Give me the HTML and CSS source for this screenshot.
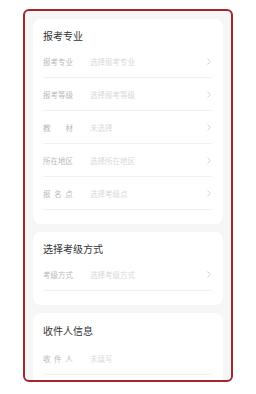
FILE: index.html
```html
<!DOCTYPE html>
<html lang="zh">
<head>
<meta charset="utf-8">
<link rel="stylesheet" href="styles.css">
</head>
<body>
<div class="frame">
  <section class="card">
    <h2 class="title">报考专业</h2>
    <div class="row"><span class="label">报考专业</span><span class="value">选择报考专业</span><svg class="chev" viewBox="0 0 4 7"><polyline points="0.5,0.5 3.3,3.5 0.5,6.5"/></svg></div>
    <div class="row"><span class="label">报考等级</span><span class="value">选择报考等级</span><svg class="chev" viewBox="0 0 4 7"><polyline points="0.5,0.5 3.3,3.5 0.5,6.5"/></svg></div>
    <div class="row"><span class="label">教　　材</span><span class="value">未选择</span><svg class="chev" viewBox="0 0 4 7"><polyline points="0.5,0.5 3.3,3.5 0.5,6.5"/></svg></div>
    <div class="row"><span class="label">所在地区</span><span class="value">选择所在地区</span><svg class="chev" viewBox="0 0 4 7"><polyline points="0.5,0.5 3.3,3.5 0.5,6.5"/></svg></div>
    <div class="row"><span class="label spaced">报名点</span><span class="value">选择考级点</span><svg class="chev" viewBox="0 0 4 7"><polyline points="0.5,0.5 3.3,3.5 0.5,6.5"/></svg></div>
  </section>
  <section class="card">
    <h2 class="title">选择考级方式</h2>
    <div class="row"><span class="label">考级方式</span><span class="value">选择考级方式</span><svg class="chev" viewBox="0 0 4 7"><polyline points="0.5,0.5 3.3,3.5 0.5,6.5"/></svg></div>
  </section>
  <section class="card last">
    <h2 class="title">收件人信息</h2>
    <div class="row"><span class="label spaced">收件人</span><span class="value">未填写</span></div>
  </section>
</div>
</body>
</html>
```
FILE: styles.css
```css
html, body {
  margin: 0;
  padding: 0;
  background: #ffffff;
}
body {
  font-family: "Noto Sans CJK SC", "Noto Sans", sans-serif;
}
.frame {
  margin: 9px 0 0 23px;
  width: 210px;
  height: 373px;
  box-sizing: border-box;
  border: 2px solid #a3262b;
  border-radius: 6px;
  background: #f6f6f6;
  padding: 8px;
  overflow: hidden;
  display: flex;
  flex-direction: column;
  gap: 8px;
}
.card {
  flex: none;
  background: #ffffff;
  border-radius: 8px;
  padding: 10px 11px 14px 10px;
}
.card.last {
  padding-top: 11px;
}
.card.last .title {
  margin-bottom: 4px;
}
.title {
  margin: 0 0 2px;
  font-size: 10px;
  line-height: 14px;
  font-weight: 400;
  color: #333333;
}
.row {
  display: flex;
  align-items: center;
  height: 32px;
  border-bottom: 1px solid #f1f1f1;
}
.label {
  width: 47px;
  flex: none;
  font-size: 7.5px;
  color: #b9b9b9;
  white-space: pre;
}
.label.spaced {
  letter-spacing: 3.6px;
}
.value {
  flex: 1;
  font-size: 7.5px;
  color: #d9d9d9;
}
.chev {
  width: 4px;
  height: 7px;
  margin-right: 1px;
  fill: none;
  stroke: #c8c8c8;
  stroke-width: 0.8;
}
```
